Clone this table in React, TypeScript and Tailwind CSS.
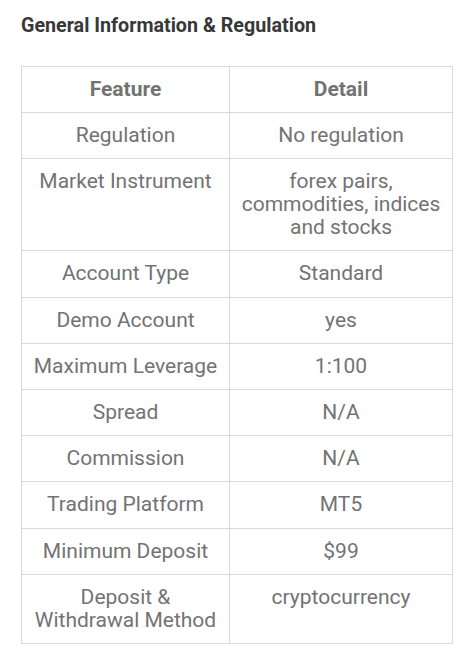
const rows: [string, string][] = [
  ["Regulation", "No regulation"],
  ["Market Instrument", "forex pairs, commodities, indices and stocks"],
  ["Account Type", "Standard"],
  ["Demo Account", "yes"],
  ["Maximum Leverage", "1:100"],
  ["Spread", "N/A"],
  ["Commission", "N/A"],
  ["Trading Platform", "MT5"],
  ["Minimum Deposit", "$99"],
  ["Deposit & Withdrawal Method", "cryptocurrency"],
];

const App = () => {
  return (
    <div className="min-h-screen bg-white px-[21px] pt-[14px] font-['Roboto',sans-serif]">
      <h2 className="text-[19.7px] leading-[24px] font-bold text-[#383838]">General Information &amp; Regulation</h2>
      <table className="mt-[28px] w-[432px] table-fixed border-collapse text-center text-[21px] leading-[23px] text-[#737373]">
        <colgroup>
          <col className="w-[208px]" />
          <col />
        </colgroup>
        <thead>
          <tr>
            <th className="border border-[#d9d9d9] px-2 py-[11px] font-bold">Feature</th>
            <th className="border border-[#d9d9d9] px-2 py-[11px] font-bold">Detail</th>
          </tr>
        </thead>
        <tbody>
          {rows.map(([feature, detail]) => (
            <tr key={feature}>
              <td className="border border-[#d9d9d9] px-2 pt-[11px] pb-[11.2px] align-top">{feature}</td>
              <td className="border border-[#d9d9d9] px-2 pt-[11px] pb-[11.2px] align-top">{detail}</td>
            </tr>
          ))}
        </tbody>
      </table>
    </div>
  );
};

export default App;
